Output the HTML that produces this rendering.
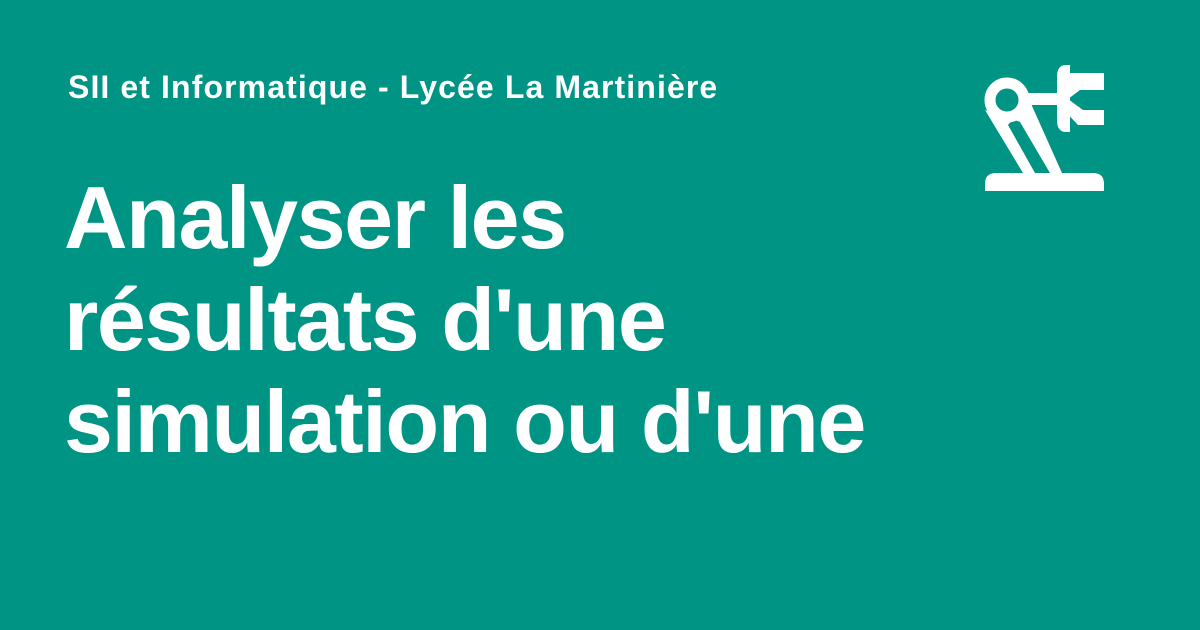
<!DOCTYPE html>
<html><head><meta charset="utf-8"><style>
html,body{margin:0;padding:0}
body{width:1200px;height:630px;background:#009485;position:relative;overflow:hidden;font-family:"Liberation Sans",sans-serif;color:#fff;font-weight:bold}
.h{position:absolute;left:68px;top:69px;font-size:32px;white-space:nowrap;letter-spacing:1.1px}
.t{position:absolute;left:64px;top:167px;font-size:88px;line-height:102px;white-space:nowrap;letter-spacing:-1.4px}
svg{position:absolute;left:0;top:0}
</style></head><body>
<div class="h">SII et Informatique - Lycée La Martinière</div>
<div class="t">Analyser les<br>résultats d'une<br>simulation ou d'une</div>
<svg width="1200" height="630">
<g fill="#fff">
<path d="M985 191 V184 Q985 173 996 173 H1093 Q1104 173 1104 184 V191 Z"/>
<rect x="1022" y="93" width="42" height="12"/>
<path d="M985 110 L1005 118 L1028 97 L1062 173 H1050 L1020 122 Q1013 118 1008 125 L1035 173 H1023 Z"/>
<circle cx="1007" cy="100" r="17" fill="none" stroke="#fff" stroke-width="11"/>
<path d="M1070 65 V132 H1066 Q1057 132 1057 120 V77 Q1057 65 1066 65 Z"/>
<path d="M1069 73 H1104 V90 H1080 L1068 99 L1083 110 H1104 V125 H1078 L1062 108 V92 Z"/>
</g>
</svg>
</body></html>
